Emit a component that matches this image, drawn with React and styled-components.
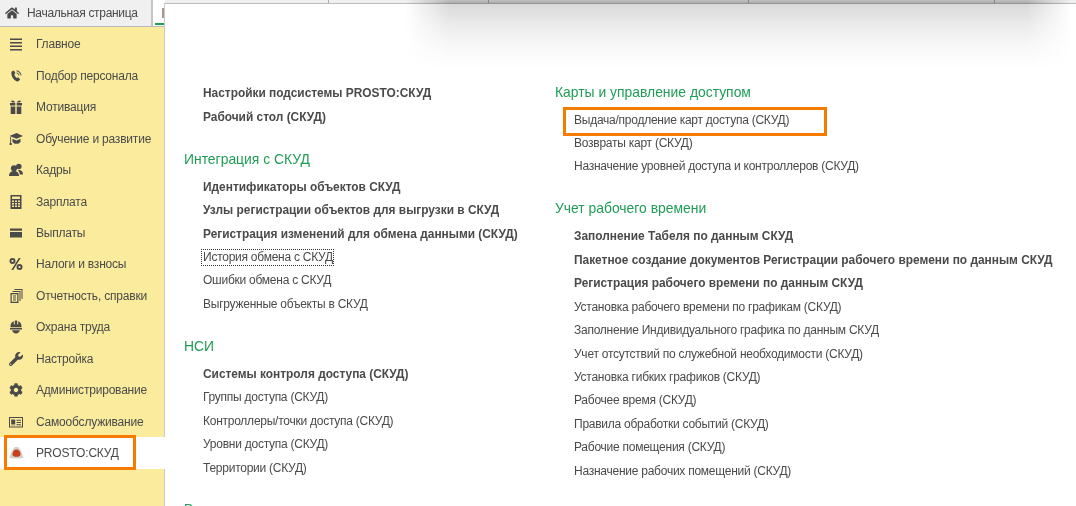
import styled, { createGlobalStyle } from 'styled-components'
import { FaHome, FaWrench, FaCog } from 'react-icons/fa'

const GlobalStyle = createGlobalStyle`
  html, body {
    margin: 0;
    padding: 0;
    height: 100%;
    overflow: hidden;
    background: #fff;
  }
  body {
    font-family: 'Liberation Sans', Arial, sans-serif;
    font-size: 12px;
    letter-spacing: -0.2px;
    color: #4a4a4a;
  }
`

const Page = styled.div`
  width: 1076px;
  height: 506px;
  overflow: hidden;
  display: flex;
  flex-direction: column;
  position: relative;
  filter: blur(0.3px);
`

const TabBar = styled.div`
  height: 27px;
  flex: none;
  display: flex;
  background: #f0f0f0;
  border-bottom: 1px solid #b9b9b9;
  box-sizing: border-box;
`

const HomeTab = styled.div`
  width: 153px;
  flex: none;
  display: flex;
  align-items: center;
  gap: 8px;
  padding-left: 5px;
  padding-bottom: 1px;
  box-sizing: border-box;
  border-right: 2px solid #c4c4c4;
  letter-spacing: -0.3px;
  svg {
    font-size: 14px;
    color: #4a4a4a;
  }
`

const OpenTab = styled.div`
  width: 12px;
  flex: none;
  background: #fff;
  padding: 8px 0 0 9px;
  box-sizing: border-box;
  position: relative;
  &::after {
    content: '';
    position: absolute;
    left: 2px;
    right: 0;
    top: 23px;
    height: 2px;
    background: #1aa14d;
  }
`

const TabIcon = styled.div`
  width: 3px;
  height: 10px;
  background: linear-gradient(90deg, #c08a70, #8fa8c4);
`

const Tab = styled.div`
  width: ${(p) => p.$width}px;
  flex: none;
  border-right: 1px solid #ababab;
  box-sizing: border-box;
`

const Body = styled.div`
  flex: 1;
  display: flex;
  min-height: 0;
`

const Sidebar = styled.nav`
  width: 165px;
  flex: none;
  background: #fbec9d;
  padding-top: 1.7px;
  box-sizing: border-box;
  border-right: 1px solid #c9c9c9;
`

const NavRow = styled.div`
  height: 31.45px;
  display: flex;
  align-items: center;
  background: ${(p) => (p.$active ? '#fff' : 'transparent')};
  position: relative;
  z-index: ${(p) => (p.$active ? 2 : 'auto')};
  margin-right: ${(p) => (p.$active ? '-2px' : '0')};
  ${(p) =>
    p.$marked &&
    `
    &::after {
      content: '';
      position: absolute;
      left: 4px;
      top: -2px;
      width: 132px;
      height: 34.5px;
      box-sizing: border-box;
      border: 3px solid #f57c00;
    }
  `}
`

const NavIcon = styled.span`
  width: 36px;
  flex: none;
  display: flex;
  justify-content: center;
  padding-right: 4px;
  box-sizing: border-box;
  color: #4a4a4a;
  font-size: 14px;
`

const Panel = styled.main`
  flex: 1;
  margin-top: -24px;
  background: #fff;
  border-top: 1px solid #bdbdbd;
  border-left: 1px solid #c9c9c9;
  margin-left: -1px;
  position: relative;
  z-index: 1;
  display: flex;
  padding: 0 0 0 19px;
  box-sizing: border-box;
  overflow: hidden;
  height: 503px;
`

const Shadow = styled.div`
  position: absolute;
  z-index: 2;
  top: 0;
  left: 405px;
  width: 667px;
  height: 68px;
  background: linear-gradient(
    180deg,
    rgba(0, 0, 0, 0.2) 0,
    rgba(0, 0, 0, 0.28) 3px,
    rgba(0, 0, 0, 0.15) 4px,
    rgba(0, 0, 0, 0.08) 25px,
    rgba(0, 0, 0, 0.03) 45px,
    rgba(0, 0, 0, 0) 100%
  );
  mask-image: linear-gradient(90deg, transparent 0, #000 45px, #000 calc(100% - 45px), transparent 100%);
  pointer-events: none;
`

const Column = styled.section`
  width: ${(p) => p.$width}px;
  flex: none;
  padding-top: ${(p) => p.$top}px;
  box-sizing: border-box;
`

const Group = styled.div`
  margin-bottom: 18.5px;
`

const Heading = styled.h2`
  margin: 0 0 4.5px;
  height: 23.5px;
  line-height: 23.5px;
  font-size: 13.9px;
  letter-spacing: 0;
  font-weight: 400;
  color: #1f9d55;
`

const Item = styled.div`
  height: 23.45px;
  line-height: 23.45px;
  margin-left: 19px;
  font-size: ${(p) => (p.$strong ? '11.9px' : '12px')};
  letter-spacing: ${(p) => (p.$strong ? '0' : '-0.25px')};
  white-space: nowrap;
  color: #4a4a4a;
  font-weight: ${(p) => (p.$strong ? 700 : 400)};
  position: relative;
  ${(p) =>
    p.$focused &&
    `
    &::after {
      content: '';
      position: absolute;
      left: -2px;
      top: 3px;
      width: 133px;
      height: 17px;
      box-sizing: border-box;
      border: 1px dotted #333;
    }
  `}
  ${(p) =>
    p.$marked &&
    `
    &::after {
      content: '';
      position: absolute;
      left: -11px;
      top: -1.8px;
      width: 264px;
      height: 29px;
      box-sizing: border-box;
      border: 3px solid #f57c00;
    }
  `}
`

const Svg = ({ children }) => (
  <svg width="14" height="14" viewBox="0 0 14 14" fill="currentColor">
    {children}
  </svg>
)

const MenuIcon = () => (
  <Svg>
    <path d="M1 1.500h12v1.400H1zM1 5h12v1.400H1zM1 8.500h12v1.400H1zM1 12h12v1.400H1z" />
  </Svg>
)

const PhoneIcon = () => (
  <Svg>
    <path d="M3 2.200 5 1.400l1.400 2.800-1.100 1c.3 1.500 1.300 3 2.700 3.800l1.200-.8 2 2.200-1.500 1.700c-.6.5-1.400.5-2.200.1C4.600 10.800 2.700 8 2.300 4.400 2.200 3.400 2.400 2.700 3 2.200z" />
    <path d="M7.500 1.200c2.800.3 4.800 2.400 5 5.200h-.9C11.400 4.200 9.800 2.500 7.500 2.200zM7.500 3.400c1.600.2 2.700 1.300 2.900 3h-.9c-.2-1.200-1-2-2-2.100z" />
  </Svg>
)

const GiftIcon = () => (
  <Svg>
    <path d="M2.500 0.500c1.500-.4 3 .4 3.800 2H3.500c-1 0-1.500-1.500-1-2zM11.500 0.500c-1.500-.4-3 .4-3.800 2h2.800c1 0 1.500-1.500 1-2zM1 3h5.300v2.500H1zM7.700 3H13v2.500H7.700zM1.700 6.500h4.600V14H1.700zM7.700 6.500h4.600V14H7.700z" />
  </Svg>
)

const CapIcon = () => (
  <Svg>
    <path d="M0.500 4 7.500 1 14 4 7.500 6.800zM3.500 6.700 7.500 8.400 11.500 6.700v3.200c-1 1.300-2.500 1.800-4 1.800s-3-.5-4-1.800zM1.200 5h.9v6h.6v2H.6v-2h.6z" />
  </Svg>
)

const PeopleIcon = () => (
  <Svg>
    <circle cx="9.800" cy="3.500" r="2.800" />
    <path d="M9 7.200c2.800-.6 5 1 5 4.300H10.800C10.700 9.800 10 8.300 9 7.200z" />
    <circle cx="5" cy="5.300" r="3.100" />
    <path d="M0 13c0-3.200 2.200-5 5-5s5 1.800 5 5z" />
  </Svg>
)

const CalcIcon = () => (
  <Svg>
    <path
      fillRule="evenodd"
      d="M1.500 0h11v14h-11zM3 1.500v2.500h8V1.500zM3 5.500v1.500h2V5.500zm3 0v1.500h2V5.500zm3 0v1.500h2V5.500zM3 8v1.500h2V8zm3 0v1.500h2V8zm3 0v1.500h2V8zM3 10.500V12h2v-1.500zm3 0V12h2v-1.500zm3 0V12h2v-1.500z"
    />
  </Svg>
)

const WalletIcon = () => (
  <Svg>
    <path d="M1 2.500h12v2.200H1zM1 6h12v5.500H1z" />
  </Svg>
)

const PercentIcon = () => (
  <Svg>
    <path
      fillRule="evenodd"
      d="M3.500 1a3 3 0 1 1 0 6 3 3 0 0 1 0-6zm0 1.900a1.100 1.100 0 1 0 0 2.200 1.100 1.100 0 0 0 0-2.200zM10.500 7a3 3 0 1 1 0 6 3 3 0 0 1 0-6zm0 1.900a1.100 1.100 0 1 0 0 2.200 1.100 1.100 0 0 0 0-2.200zM9.800 1h1.900L4.200 13H2.300z"
    />
  </Svg>
)

const ReportIcon = () => (
  <Svg>
    <path
      fillRule="evenodd"
      d="M1.500 4h8v10h-8zM2.700 5.200v7.600h5.600V5.200zM4 6.500h3v1H4zM4 8.500h3v1H4zM4 10.500h3v1H4zM3.500 2h8v10h-1V3h-7zM5.500 0h8v10h-1V1h-7z"
    />
  </Svg>
)

const HelmetIcon = () => (
  <Svg>
    <path d="M5.800 0.500h2.400v4h1V1.200c2 .7 3.300 2.500 3.300 5v1H1.500v-1c0-2.500 1.300-4.300 3.300-5v3.300h1zM1 8h12v1.500H1zM3 10.300h8C10.500 12.300 9 13.500 7 13.500s-3.500-1.200-4-3.200z" />
  </Svg>
)

const CardIcon = () => (
  <Svg>
    <path
      fillRule="evenodd"
      d="M0 2h14v10.500H0zM1 3v8.500h12V3zM2.200 4.500h4v4.500h-4zM7.500 4.800h4.500v1H7.500zM7.500 7h4.500v1H7.500zM7.500 9.200h4.500v1H7.500zM2.200 9.600h4v.7h-4z"
    />
  </Svg>
)

const ProstoIcon = () => (
  <svg width="15" height="14" viewBox="0 0 15 14">
    <path d="M7.500 0.800c3 0 5 4.200 7 11-2 1-12 1-14 0 2-6.800 4-11 7-11z" fill="#d3d0ca" />
    <path d="M7.500 3.500c2.200 0 4 2 4 4.700 0 1.900-1.800 2.500-4 2.500s-4-.6-4-2.500C3.500 5.500 5.300 3.500 7.500 3.500z" fill="#c6401c" />
  </svg>
)

const navItems = [
  { label: 'Главное', icon: <MenuIcon /> },
  { label: 'Подбор персонала', icon: <PhoneIcon /> },
  { label: 'Мотивация', icon: <GiftIcon /> },
  { label: 'Обучение и развитие', icon: <CapIcon /> },
  { label: 'Кадры', icon: <PeopleIcon /> },
  { label: 'Зарплата', icon: <CalcIcon /> },
  { label: 'Выплаты', icon: <WalletIcon /> },
  { label: 'Налоги и взносы', icon: <PercentIcon /> },
  { label: 'Отчетность, справки', icon: <ReportIcon /> },
  { label: 'Охрана труда', icon: <HelmetIcon /> },
  { label: 'Настройка', icon: <FaWrench /> },
  { label: 'Администрирование', icon: <FaCog /> },
  { label: 'Самообслуживание', icon: <CardIcon /> },
  { label: 'PROSTO:СКУД', icon: <ProstoIcon />, active: true },
]

const leftGroups = [
  {
    items: [
      { text: 'Настройки подсистемы PROSTO:СКУД', strong: true },
      { text: 'Рабочий стол (СКУД)', strong: true },
    ],
  },
  {
    title: 'Интеграция с СКУД',
    items: [
      { text: 'Идентификаторы объектов СКУД', strong: true },
      { text: 'Узлы регистрации объектов для выгрузки в СКУД', strong: true },
      { text: 'Регистрация изменений для обмена данными (СКУД)', strong: true },
      { text: 'История обмена с СКУД', focused: true },
      { text: 'Ошибки обмена с СКУД' },
      { text: 'Выгруженные объекты в СКУД' },
    ],
  },
  {
    title: 'НСИ',
    items: [
      { text: 'Системы контроля доступа (СКУД)', strong: true },
      { text: 'Группы доступа (СКУД)' },
      { text: 'Контроллеры/точки доступа (СКУД)' },
      { text: 'Уровни доступа (СКУД)' },
      { text: 'Территории (СКУД)' },
    ],
  },
  { title: 'В', items: [] },
]

const rightGroups = [
  {
    title: 'Карты и управление доступом',
    items: [
      { text: 'Выдача/продление карт доступа (СКУД)', marked: true },
      { text: 'Возвраты карт (СКУД)' },
      { text: 'Назначение уровней доступа и контроллеров (СКУД)' },
    ],
  },
  {
    title: 'Учет рабочего времени',
    items: [
      { text: 'Заполнение Табеля по данным СКУД', strong: true },
      { text: 'Пакетное создание документов Регистрации рабочего времени по данным СКУД', strong: true },
      { text: 'Регистрация рабочего времени по данным СКУД', strong: true },
      { text: 'Установка рабочего времени по графикам (СКУД)' },
      { text: 'Заполнение Индивидуального графика по данным СКУД' },
      { text: 'Учет отсутствий по служебной необходимости (СКУД)' },
      { text: 'Установка гибких графиков (СКУД)' },
      { text: 'Рабочее время (СКУД)' },
      { text: 'Правила обработки событий (СКУД)' },
      { text: 'Рабочие помещения (СКУД)' },
      { text: 'Назначение рабочих помещений (СКУД)' },
    ],
  },
]

const renderGroup = (group, i) => (
  <Group key={i}>
    {group.title && <Heading>{group.title}</Heading>}
    {group.items.map((item) => (
      <Item key={item.text} $strong={item.strong} $focused={item.focused} $marked={item.marked}>
        {item.text}
      </Item>
    ))}
  </Group>
)

const App = () => {
  return (
    <Page>
      <GlobalStyle />
      <TabBar>
        <HomeTab>
          <FaHome />
          Начальная страница
        </HomeTab>
        <OpenTab>
          <TabIcon />
        </OpenTab>
        <Tab $width={164} />
        <Tab $width={160} />
        <Tab $width={260} />
        <Tab $width={246} />
      </TabBar>
      <Body>
        <Sidebar>
          {navItems.map((item) => (
            <NavRow key={item.label} $active={item.active} $marked={item.active}>
              <NavIcon>{item.icon}</NavIcon>
              {item.label}
            </NavRow>
          ))}
        </Sidebar>
        <Panel>
          <Column $width={371} $top={78.3}>
            {leftGroups.map(renderGroup)}
          </Column>
          <Column $width={520} $top={76.6}>
            {rightGroups.map(renderGroup)}
          </Column>
        </Panel>
      </Body>
      <Shadow />
    </Page>
  )
}

export default App
